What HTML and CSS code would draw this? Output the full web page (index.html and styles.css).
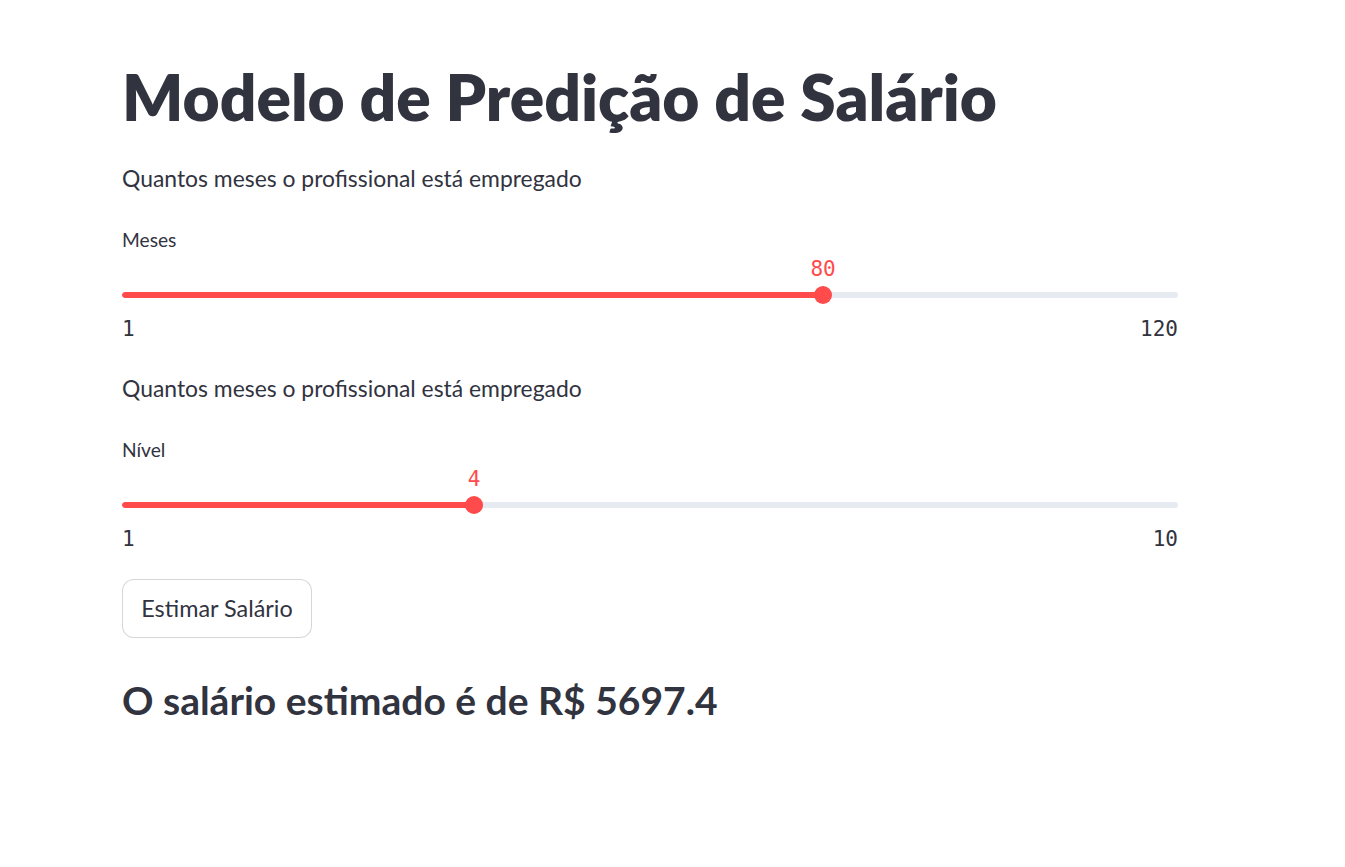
FILE: index.html
```html
<!DOCTYPE html>
<html lang="pt">
<head>
<meta charset="utf-8">
<title>Modelo de Predição de Salário</title>
<link rel="stylesheet" href="styles.css">
</head>
<body>
<main class="main">
  <h1 class="title">Modelo de Predição de Salário</h1>
  <p class="text">Quantos meses o profissional está empregado</p>
  <div class="widget">
    <div class="label">Meses</div>
    <div class="slider">
      <div class="track"><div class="fill" style="width:66.39%"></div></div>
      <div class="value" style="left:66.39%">80</div>
      <div class="thumb" style="left:66.39%"></div>
    </div>
    <div class="ticks"><span>1</span><span>120</span></div>
  </div>
  <p class="text text-2">Quantos meses o profissional está empregado</p>
  <div class="widget">
    <div class="label">Nível</div>
    <div class="slider">
      <div class="track"><div class="fill" style="width:33.33%"></div></div>
      <div class="value" style="left:33.33%">4</div>
      <div class="thumb" style="left:33.33%"></div>
    </div>
    <div class="ticks"><span>1</span><span>10</span></div>
  </div>
  <button class="button" type="button">Estimar Salário</button>
  <h3 class="result">O salário estimado é de R$ 5697.4</h3>
</main>
</body>
</html>
```

FILE: styles.css
```css
html, body {
  margin: 0;
  padding: 0;
  background: #ffffff;
}
body {
  font-family: Lato, "Noto Sans", sans-serif;
  color: #31333f;
}
.main {
  width: 1056px;
  margin-left: 122px;
  padding-top: 57px;
  display: flex;
  flex-direction: column;
  align-items: flex-start;
}
.title {
  margin: 0;
  font-size: 64px;
  font-weight: 800;
  line-height: 80px;
  height: 80px;
  white-space: nowrap;
}
.text {
  margin: 23px 0 0;
  font-size: 22.9px;
  line-height: 36px;
  height: 36px;
  white-space: nowrap;
}
.text-2 {
  margin-top: 28px;
}
.widget {
  width: 100%;
  margin-top: 29px;
}
.label {
  font-size: 19.2px;
  line-height: 30px;
  height: 30px;
}
.slider {
  position: relative;
  height: 61px;
}
.track {
  position: absolute;
  left: 0;
  right: 0;
  top: 37px;
  height: 6px;
  border-radius: 3px;
  background: #e6eaf1;
  overflow: hidden;
}
.fill {
  height: 100%;
  background: #ff4b4b;
  border-radius: 3px;
}
.value {
  position: absolute;
  top: 2px;
  transform: translateX(-50%);
  font-family: "DejaVu Sans Mono", "Liberation Mono", monospace;
  font-size: 21px;
  line-height: 24px;
  color: #ff4b4b;
}
.thumb {
  position: absolute;
  top: 31px;
  width: 18px;
  height: 18px;
  margin-left: -9px;
  border-radius: 50%;
  background: #ff4b4b;
}
.ticks {
  display: flex;
  justify-content: space-between;
  font-family: "DejaVu Sans Mono", "Liberation Mono", monospace;
  font-size: 21px;
  line-height: 26px;
  height: 26px;
}
.button {
  margin-top: 27px;
  width: 190px;
  height: 59px;
  padding: 0 18px;
  box-sizing: border-box;
  background: #ffffff;
  border: 1px solid rgba(49, 51, 63, 0.2);
  border-radius: 12px;
  font-family: Lato, "Noto Sans", sans-serif;
  font-size: 23.4px;
  color: #31333f;
  line-height: 57px;
  white-space: nowrap;
}
.result {
  margin: 34px 0 0;
  font-size: 39px;
  font-weight: 700;
  line-height: 56px;
  height: 56px;
  white-space: nowrap;
}
```
